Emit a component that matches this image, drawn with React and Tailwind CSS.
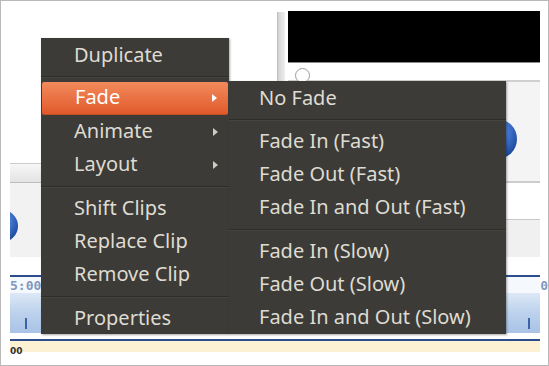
import React from "react";

const mainItems = [
  { label: "Duplicate" },
  { sep: true },
  { label: "Fade", arrow: true, active: true },
  { label: "Animate", arrow: true },
  { label: "Layout", arrow: true },
  { sep: true, tall: true },
  { label: "Shift Clips" },
  { label: "Replace Clip" },
  { label: "Remove Clip" },
  { sep: true, tall: true },
  { label: "Properties" },
];

const fadeItems = [
  { label: "No Fade" },
  { sep: true },
  { label: "Fade In (Fast)" },
  { label: "Fade Out (Fast)" },
  { label: "Fade In and Out (Fast)" },
  { sep: true, tall: true },
  { label: "Fade In (Slow)" },
  { label: "Fade Out (Slow)" },
  { label: "Fade In and Out (Slow)" },
];

function Arrow({ light }) {
  return (
    <svg width="5" height="8" viewBox="0 0 5 8" className="shrink-0">
      <path d="M0 0 L5 4 L0 8 Z" fill={light ? "#ffffff" : "#cfcbc2"} />
    </svg>
  );
}

function MenuItem({ item, padLeft }) {
  if (item.sep) {
    return (
      <div className={(item.tall ? "h-[11px]" : "h-[10px]") + " flex items-center"}>
        <div className="w-full h-[2px] border-t border-[#2e2d2a] border-b border-b-[#45443f]" />
      </div>
    );
  }
  return (
    <div
      className={
        "h-[33px] flex items-center justify-between pr-[11px] " +
        padLeft +
        (item.active
          ? " mx-[1px] rounded-[2px] bg-gradient-to-b from-[#f28a5b] to-[#e1592b] border-b border-[#c24f22] text-white"
          : " text-[#dfdbd2]")
      }
    >
      <span className="leading-none pb-[2px]">{item.label}</span>
      {item.arrow && <Arrow light={item.active} />}
    </div>
  );
}

function Sphere({ size }) {
  return (
    <div
      className={
        "rounded-full shrink-0 bg-[radial-gradient(circle_at_38%_32%,#a9caf3_0%,#3f74cf_45%,#1a4596_80%,#12336f_100%)] " +
        size
      }
    />
  );
}

export default function App() {
  return (
    <div className="w-[549px] h-[366px] relative overflow-hidden bg-white border border-[#b9b9b9] font-['Noto_Sans',sans-serif]">
      {/* application behind the menu */}
      <div className="flex flex-col h-full pl-[9px] pr-[8px]">
        <div className="flex h-[256px]">
          {/* left tool panel */}
          <div className="w-[267px] flex flex-col">
            <div className="h-[162px]" />
            <div className="h-[20px] border-t border-[#cdcdcd] border-b border-b-[#bcbcbc] bg-gradient-to-b from-[#f7f7f7] to-[#e3e3e3]" />
            <div className="flex-1 bg-[#f2f2f2] overflow-hidden pt-[27px]">
              <div className="ml-[-24px]">
                <Sphere size="w-[32px] h-[32px]" />
              </div>
            </div>
          </div>
          {/* right preview panel */}
          <div className="flex-1 flex gap-[3px]">
            <div className="w-[8px] mt-[11px] bg-gradient-to-r from-[#d4d4d4] to-[#eeeeee] border-l border-[#bdbdbd]" />
            <div className="flex-1 flex flex-col pt-[10px]">
              <div className="h-[52px] bg-black border-b border-[#8a8a8a]" />
              <div className="h-[17px] relative">
                <div className="absolute left-[7px] top-[5px] w-[15px] h-[15px] rounded-full bg-white border border-[#9c9c9c]" />
              </div>
              <div className="h-[101px] border-t-2 border-[#cfcfcf] bg-[#f4f4f4] flex justify-end pr-[23px] pt-[37px]">
                <Sphere size="w-[40px] h-[40px]" />
              </div>
              <div className="h-[38px] border-t-2 border-[#cccccc] bg-white" />
              <div className="flex-1 border-t border-[#c8c8c8] bg-[#f0f0f0]" />
            </div>
          </div>
        </div>
        <div className="h-[18px]" />
        {/* timeline */}
        <div className="border-t-2 border-[#2d4c8c]">
          <div className="h-[16px] flex justify-between items-center bg-[#f5f8fc] text-[13px] font-bold text-[#8299c0] font-['DejaVu_Sans_Mono',monospace]">
            <span className="pt-[1px] leading-none">5:00</span>
            <span className="mr-[-8px] pt-[1px] leading-none">0</span>
          </div>
          <div className="h-[40px] bg-gradient-to-b from-[#dde8f5] via-[#bcd1ec] to-[#a9c3e6] flex justify-between items-end pb-[4px] pl-[15px] pr-[10px]">
            <div className="w-[2px] h-[11px] bg-[#3d62a8]" />
            <div className="w-[2px] h-[11px] bg-[#3d62a8]" />
          </div>
          <div className="h-[6px]" />
          <div className="h-[2px] bg-[#2d4c8c]" />
          <div className="h-[11px] bg-[#fdf1d4]" />
          <div className="mt-[-5px] text-[9px] leading-none font-bold text-[#333] font-['DejaVu_Sans',sans-serif]">00</div>
        </div>
      </div>

      {/* context menu */}
      <div className="absolute left-[40px] top-[37px] w-[188px] h-[296px] bg-[#3c3b37] text-[20px] pt-[1px] shadow-[1px_1px_2px_rgba(0,0,0,0.35)]">
        {mainItems.map((item, i) => (
          <MenuItem key={i} item={item} padLeft="pl-[33px]" />
        ))}
      </div>

      {/* fade submenu */}
      <div className="absolute left-[228px] top-[80px] w-[277px] h-[253px] bg-[#3c3b37] text-[20px] pt-[1px] shadow-[1px_1px_2px_rgba(0,0,0,0.35)]">
        {fadeItems.map((item, i) => (
          <MenuItem key={i} item={item} padLeft="pl-[30px]" />
        ))}
      </div>
    </div>
  );
}
